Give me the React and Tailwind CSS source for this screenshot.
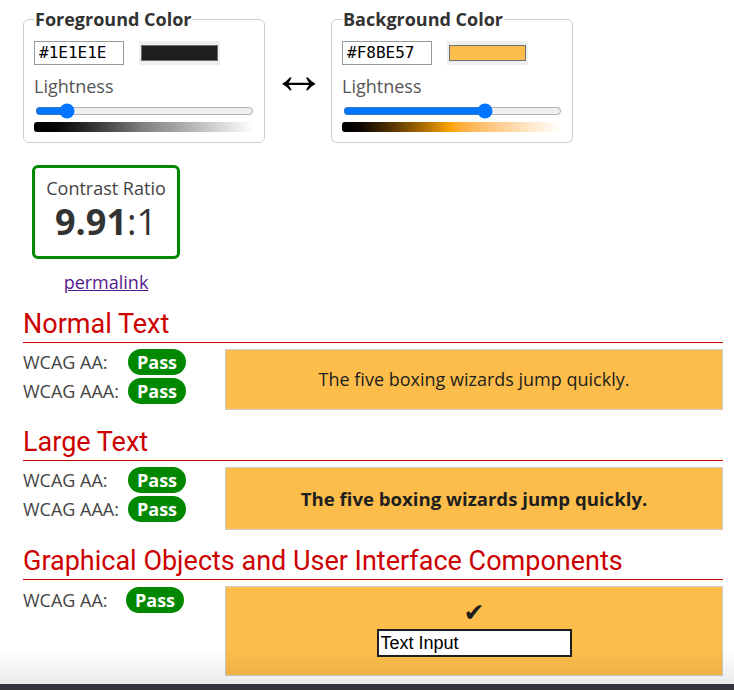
export default function App() {
  const Pass = () => (
    <span className="w-[58px] h-[26px] rounded-full bg-[#008800] text-white font-bold text-[18px] leading-none flex items-center justify-center">
      Pass
    </span>
  );

  const ColorBox = ({ title, hex, swatch, value, gradient }) => (
    <fieldset className="w-[241px] border border-[#cccccc] rounded-[6px] px-[10px] pb-[10px]">
      <legend className="px-[1px] text-[18px] leading-[22px] font-bold text-[#333333]">{title}</legend>
      <div className="mt-[11px] flex items-center gap-[15px]">
        <input
          defaultValue={hex}
          className="w-[90px] h-[24px] border border-[#999999] bg-white pl-[4px] text-[16px] text-black font-['DejaVu_Sans_Mono',monospace]"
        />
        <div className="w-[81px] h-[24px] bg-[#efefef] px-[2px] py-[4px]">
          <div className={`h-full border border-[#6b6f76] ${swatch}`} />
        </div>
      </div>
      <div className="mt-[10px] text-[18px] leading-[23px] text-[#555555]">Lightness</div>
      <input type="range" min="0" max="100" defaultValue={value} className="mt-[5px] ml-[1px] block w-[219px] h-[16px]" />
      <div className={`mt-[3px] h-[10px] w-[219px] rounded-[3px] bg-linear-to-r ${gradient}`} />
    </fieldset>
  );

  const Heading = ({ children }) => (
    <h2 className="font-['Roboto',sans-serif] text-[27px] leading-[30px] text-[#cc0000] pb-[3px] border-b border-[#cc0000]">
      {children}
    </h2>
  );

  const Row = ({ label, w = "w-[105px]" }) => (
    <div className="h-[26px] flex items-center">
      <span className={`${w} text-[18px] text-[#444444]`}>{label}</span>
      <Pass />
    </div>
  );

  return (
    <div className="relative w-[734px] h-[690px] overflow-hidden bg-white font-['Open_Sans',sans-serif]">
      <div className="pl-[23px] pr-[11px] pt-[8px]">
        <div className="flex items-center">
          <ColorBox
            title="Foreground Color"
            hex="#1E1E1E"
            swatch="bg-[#1E1E1E]"
            value={12}
            gradient="from-black via-[#808080] to-white"
          />
          <span className="ml-[16px] mr-[14px] w-[36px] mb-[4px] flex justify-center text-[55px] leading-[40px] font-['Liberation_Sans',sans-serif] text-black">↔</span>
          <ColorBox
            title="Background Color"
            hex="#F8BE57"
            swatch="bg-[#fdbd4b]"
            value={66}
            gradient="from-black via-[#ffa500] to-white"
          />
        </div>

        <div className="mt-[22px] ml-[9px] w-[148px] flex flex-col items-center">
          <div className="w-[148px] h-[94px] border-[3px] border-[#008800] rounded-[6px] flex flex-col items-center pt-[9px]">
            <div className="text-[18px] leading-[23px] text-[#444444]">Contrast Ratio</div>
            <div className="text-[36px] leading-[44px] text-[#333333]">
              <span className="font-bold">9.91</span>:1
            </div>
          </div>
          <a href="#" className="mt-[12px] text-[18px] leading-[23px] text-[#551a8b] underline">permalink</a>
        </div>

        <section className="mt-[15px]">
          <Heading>Normal Text</Heading>
          <div className="mt-[6px] flex">
            <div className="w-[202px] flex flex-col gap-[3px]">
              <Row label="WCAG AA:" />
              <Row label="WCAG AAA:" />
            </div>
            <div className="flex-1 h-[61px] border border-[#cccccc] bg-[#fdbd4b] flex items-center justify-center text-[18px] text-[#1E1E1E]">
              The five boxing wizards jump quickly.
            </div>
          </div>
        </section>

        <section className="mt-[17px]">
          <Heading>Large Text</Heading>
          <div className="mt-[6px] flex">
            <div className="w-[202px] flex flex-col gap-[3px]">
              <Row label="WCAG AA:" />
              <Row label="WCAG AAA:" />
            </div>
            <div className="flex-1 h-[63px] border border-[#cccccc] bg-[#fdbd4b] flex items-center justify-center text-[18.6px] font-bold text-[#1E1E1E]">
              The five boxing wizards jump quickly.
            </div>
          </div>
        </section>

        <section className="mt-[16px]">
          <Heading>Graphical Objects and User Interface Components</Heading>
          <div className="mt-[6px] flex">
            <div className="w-[202px] flex flex-col pt-[1px]">
              <Row label="WCAG AA:" w="w-[103px]" />
            </div>
            <div className="flex-1 h-[90px] border border-[#cccccc] bg-[#fdbd4b] flex flex-col items-center pt-[13px]">
              <span className="text-[25px] leading-[25px] text-[#1E1E1E] font-['DejaVu_Sans',sans-serif]">✔</span>
              <input
                defaultValue="Text Input"
                className="mt-[4px] w-[195px] h-[28px] border-2 border-[#1E1E1E] bg-white px-[2px] text-[18px] text-black font-['Liberation_Sans',sans-serif]"
              />
            </div>
          </div>
        </section>
      </div>

      <div className="absolute inset-x-0 bottom-0 pointer-events-none">
        <div className="h-[34px] bg-linear-to-b from-transparent to-black/[0.08]" />
        <div className="h-[6px] bg-[#34363b]" />
      </div>
    </div>
  );
}
